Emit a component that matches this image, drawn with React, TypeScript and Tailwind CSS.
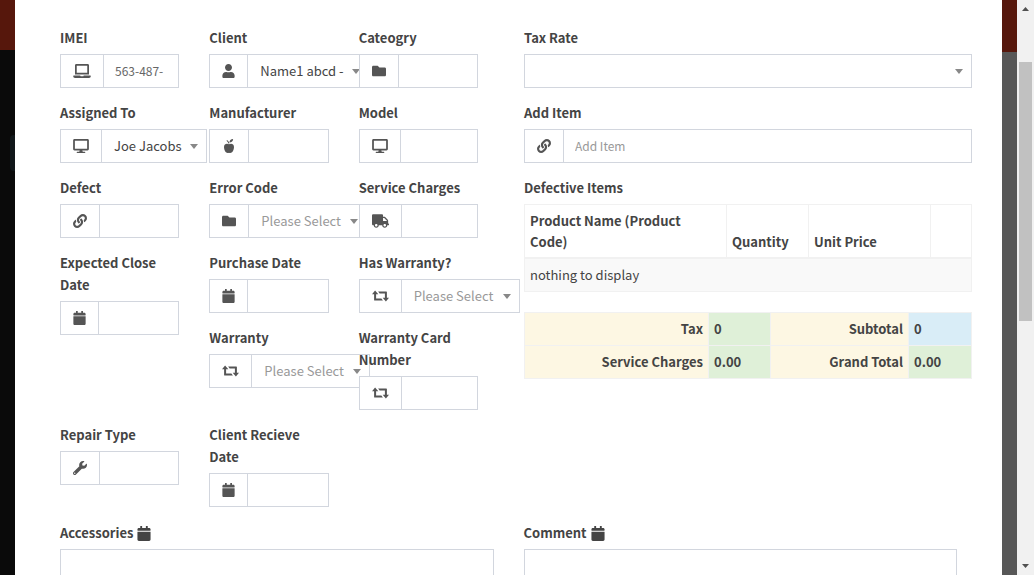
import { useId, type ReactNode } from "react";
import {
  FaCalendar,
  FaDesktop,
  FaFolder,
  FaLaptop,
  FaLink,
  FaTruck,
  FaUser,
  FaWrench,
} from "react-icons/fa";

function AppleIcon() {
  return (
    <svg viewBox="0 0 14 14" className="h-3.5 w-3.5 fill-current">
      <path d="M7 5.300C5.700 4.300 2 4.100 2 8c0 3 1.800 6 3.700 6 .6 0 .9-.3 1.300-.3s.7.3 1.300.3C10.200 14 12 11 12 8c0-3.900-3.700-3.700-5-2.700z" />
      <path d="M7.400 3.600c0-2 1.400-3.300 3.700-3.500 0 2-1.500 3.400-3.700 3.500z" />
      <path d="M4.300 1.800l1.100-.6c1.100.8 1.800 1.900 2 3.300H6.300c-.2-1.200-.9-2.100-2-2.700z" />
    </svg>
  );
}

function RetweetIcon() {
  return (
    <svg viewBox="0 0 17 14" className="h-3.5 w-[17px] fill-current">
      <path d="M3.100 1.500L6.300 5.300H4.100v4.300h5.300l1.500 1.900H2.700a.6.600 0 0 1-.6-.6V5.300H0z" />
      <path d="M13.900 12.500l-3.200-3.800h2.200V4.400H7.600L6.100 2.500h8.200a.6.600 0 0 1 .6.600v5.600H17z" />
    </svg>
  );
}

const icons = {
  laptop: <FaLaptop className="h-3.5 w-[18px]" />,
  user: <FaUser className="h-3.5 w-[13px]" />,
  folder: <FaFolder className="h-3.5 w-3.5" />,
  desktop: <FaDesktop className="h-3.5 w-4" />,
  apple: <AppleIcon />,
  link: <FaLink className="h-3.5 w-3.5" />,
  truck: <FaTruck className="h-3.5 w-[17px]" />,
  calendar: <FaCalendar className="h-3.5 w-[13px]" />,
  retweet: <RetweetIcon />,
  wrench: <FaWrench className="h-3.5 w-3.5" />,
};

type IconName = keyof typeof icons;

function Addon({ icon }: { icon: IconName }) {
  return (
    <span className="flex shrink-0 items-center border border-r-0 border-[#d2d6de] bg-white px-3 text-[#555]">
      {icons[icon]}
    </span>
  );
}

function Label({ id, children }: { id: string; children: ReactNode }) {
  return (
    <label htmlFor={id} className="mb-[5px] block font-bold leading-[22px]">
      {children}
    </label>
  );
}

function TextField({
  label,
  icon,
  value,
  placeholder,
  className = "",
}: {
  label: string;
  icon: IconName;
  value?: string;
  placeholder?: string;
  className?: string;
}) {
  const id = useId();
  return (
    <div className={className}>
      <Label id={id}>{label}</Label>
      <div className="flex h-[34px]">
        <Addon icon={icon} />
        <input
          id={id}
          type="text"
          defaultValue={value}
          placeholder={placeholder}
          className="w-0 min-w-0 flex-1 border border-[#d2d6de] bg-white px-[11px] text-xs text-[#666] outline-none placeholder:text-[#999]"
        />
      </div>
    </div>
  );
}

function SelectField({
  label,
  icon,
  value,
  muted = false,
  width = "w-full",
}: {
  label: string;
  icon?: IconName;
  value: string;
  muted?: boolean;
  width?: string;
}) {
  const id = useId();
  return (
    <div>
      <Label id={id}>{label}</Label>
      <div className="flex h-[34px]">
        {icon && <Addon icon={icon} />}
        <span className={`grid shrink-0 items-center ${width}`}>
          <select
            id={id}
            className={`col-start-1 row-start-1 h-[34px] w-full appearance-none border border-[#d2d6de] bg-white pl-3 outline-none ${
              muted ? "text-[#999]" : "text-[#444]"
            }`}
          >
            <option>{value}</option>
          </select>
          <svg
            viewBox="0 0 8 5"
            className="pointer-events-none col-start-1 row-start-1 mr-[9px] h-[5px] w-2 justify-self-end fill-[#888]"
          >
            <path d="M0 0h8L4 5z" />
          </svg>
        </span>
      </div>
    </div>
  );
}

function NoteField({ label }: { label: string }) {
  const id = useId();
  return (
    <div>
      <label htmlFor={id} className="mb-[5px] flex items-center gap-1 font-bold leading-[22px]">
        {label}
        <FaCalendar className="h-[15px] w-3.5" />
      </label>
      <textarea
        id={id}
        rows={5}
        className="block w-full resize-none border border-[#d2d6de] bg-white px-3 py-1.5 outline-none"
      />
    </div>
  );
}

function DefectiveItems() {
  return (
    <section>
      <h2 className="mb-[5px] font-bold leading-[22px]">Defective Items</h2>
      <table className="mb-5 w-full table-fixed border-collapse border border-[#f1f1f1] text-left">
        <thead>
          <tr className="align-bottom leading-[21px]">
            <th className="border border-[#f1f1f1] p-[5px]">Product Name (Product Code)</th>
            <th className="w-[82px] border border-[#f1f1f1] p-[5px]">Quantity</th>
            <th className="w-[122px] border border-[#f1f1f1] p-[5px]">Unit Price</th>
            <th className="w-[41px] border border-[#f1f1f1] p-[5px]" />
          </tr>
        </thead>
        <tbody>
          <tr className="bg-[#f9f9f9] leading-[22px]">
            <td colSpan={4} className="border border-t-2 border-[#f1f1f1] p-[5px]">
              nothing to display
            </td>
          </tr>
        </tbody>
      </table>
    </section>
  );
}

function Totals() {
  const cell = "border border-[#f1f1f1] p-[5px]";
  return (
    <table className="w-full table-fixed border-collapse text-left font-bold leading-[22px]">
      <tbody>
        <tr>
          <th className={`${cell} bg-[#fdf7e3] text-right`}>Tax</th>
          <td className={`${cell} w-[62px] bg-[#dff0d8]`}>0</td>
          <th className={`${cell} w-[138px] bg-[#fdf7e3] text-right`}>Subtotal</th>
          <td className={`${cell} w-[63px] bg-[#d9edf7]`}>0</td>
        </tr>
        <tr>
          <th className={`${cell} bg-[#fdf7e3] text-right`}>Service Charges</th>
          <td className={`${cell} bg-[#dff0d8]`}>0.00</td>
          <th className={`${cell} bg-[#fdf7e3] text-right`}>Grand Total</th>
          <td className={`${cell} bg-[#dff0d8]`}>0.00</td>
        </tr>
      </tbody>
    </table>
  );
}

function Scrollbar() {
  return (
    <div aria-hidden="true" className="flex w-[17px] shrink-0 flex-col items-center bg-[#f1f1f1]">
      <svg viewBox="0 0 17 17" className="h-[17px] w-[17px] shrink-0 fill-[#505050]">
        <path d="M5 11h7L8.500 7z" />
      </svg>
      <div className="mt-[45px] h-[45%] w-[13px] bg-[#c1c1c1]" />
      <svg viewBox="0 0 17 17" className="mt-auto h-[17px] w-[17px] shrink-0 fill-[#505050]">
        <path d="M5 6h7L8.500 10z" />
      </svg>
    </div>
  );
}

export default function App() {
  return (
    <div className="flex h-screen overflow-hidden font-['Noto_Sans_CJK_SC','Noto_Sans',sans-serif] text-[13px] text-[#444]">
      <div className="flex w-[15px] shrink-0 flex-col items-end bg-[#0a0a0a]">
        <div className="h-[50px] w-full bg-[#56170c]" />
        <div className="mt-[85px] h-9 w-[5px] rounded-l-sm bg-[#11171a]" />
      </div>

      <form className="min-w-0 flex-1 bg-white pt-[27px]">
        <div className="mb-[15px] grid grid-cols-2 items-start gap-4 pl-[45px] pr-[30px]">
          <div className="grid grid-cols-3 items-start gap-x-[30px] gap-y-3.5 pr-[30px]">
            <TextField label="IMEI" icon="laptop" value="563-487-" />
            <SelectField label="Client" icon="user" value="Name1 abcd -" width="w-[122px]" />
            <TextField label="Cateogry" icon="folder" />

            <SelectField label="Assigned To" icon="desktop" value="Joe Jacobs" width="w-[106px]" />
            <TextField label="Manufacturer" icon="apple" />
            <TextField label="Model" icon="desktop" />

            <TextField label="Defect" icon="link" />
            <SelectField label="Error Code" icon="folder" value="Please Select" muted width="w-[119px]" />
            <TextField label="Service Charges" icon="truck" />

            <TextField label="Expected Close Date" icon="calendar" className="row-span-2" />
            <TextField label="Purchase Date" icon="calendar" />
            <SelectField label="Has Warranty?" icon="retweet" value="Please Select" muted width="w-[119px]" />

            <SelectField label="Warranty" icon="retweet" value="Please Select" muted width="w-[119px]" />
            <TextField label="Warranty Card Number" icon="retweet" />

            <TextField label="Repair Type" icon="wrench" />
            <TextField label="Client Recieve Date" icon="calendar" />
          </div>

          <div className="flex flex-col gap-3.5">
            <SelectField label="Tax Rate" value="" />
            <TextField label="Add Item" icon="link" placeholder="Add Item" />
            <div>
              <DefectiveItems />
              <Totals />
            </div>
          </div>
        </div>

        <div className="grid grid-cols-2 gap-[30px] px-[45px]">
          <NoteField label="Accessories" />
          <NoteField label="Comment" />
        </div>
      </form>

      <div className="w-[15px] shrink-0 bg-[#575757]">
        <div className="h-[52px] bg-[#56170c]" />
      </div>
      <Scrollbar />
    </div>
  );
}
